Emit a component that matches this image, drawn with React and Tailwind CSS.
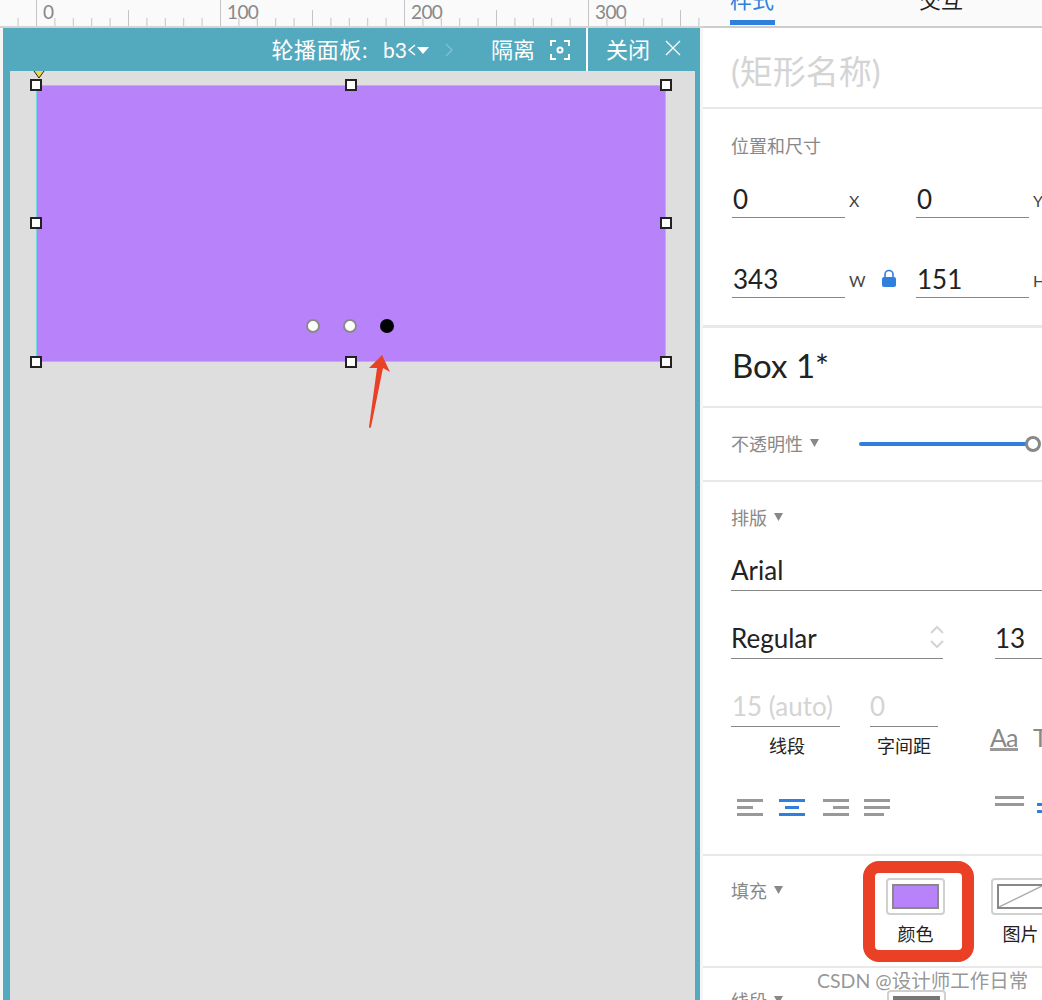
const font = { fontFamily: 'Lato, "Noto Sans CJK SC", sans-serif' }

const ticks = Array.from({ length: 38 }, (_, i) => i - 1)

const Ruler = () => (
  <div className="relative h-[28px] bg-[#fafafa] border-b-2 border-[#d4d4d4] overflow-hidden">
    <svg width="703" height="27" className="block">
      {ticks.map((n) => {
        const x = 36.5 + n * 18.4
        const y1 = n % 10 === 0 ? 0 : n % 5 === 0 ? 10 : 18
        return <line key={n} x1={x} x2={x} y1={y1} y2="26" stroke="#c4c4c4" strokeWidth="1" />
      })}
    </svg>
    {[
      ['0', 'left-[43px]'],
      ['100', 'left-[227px]'],
      ['200', 'left-[411px]'],
      ['300', 'left-[595px]'],
    ].map(([label, pos]) => (
      <span key={label} className={`absolute top-[1px] text-[19px] leading-[22px] tracking-[-0.6px] text-[#888] ${pos}`}>
        {label}
      </span>
    ))}
  </div>
)

const Handle = ({ pos }) => (
  <span className={`absolute w-[12px] h-[12px] bg-white border-2 border-[#222] ${pos}`} />
)

const Canvas = () => (
  <div className="relative flex-1 bg-[#dedede] pl-[26px] pt-[14px]">
    <svg width="12" height="8" className="absolute left-[23px] top-0">
      <path d="M1 0 L6 7 L11 0" fill="#ecd94a" stroke="#222" strokeWidth="1" />
    </svg>
    <div className="relative w-[630px] h-[277px] bg-[#b882fa] border-[1.5px] border-[#6fd8d8] flex items-end justify-center gap-[23px] pb-[28px] pr-[3px]">
      <span className="w-[14px] h-[14px] rounded-full bg-white border-2 border-[#8a8a8a]" />
      <span className="w-[14px] h-[14px] rounded-full bg-white border-2 border-[#8a8a8a]" />
      <span className="w-[14px] h-[14px] rounded-full bg-black" />
      <Handle pos="-left-[7px] -top-[7px]" />
      <Handle pos="left-[308px] -top-[7px]" />
      <Handle pos="-right-[7px] -top-[7px]" />
      <Handle pos="-left-[7px] top-[131px]" />
      <Handle pos="-right-[7px] top-[131px]" />
      <Handle pos="-left-[7px] -bottom-[7px]" />
      <Handle pos="left-[308px] -bottom-[7px]" />
      <Handle pos="-right-[7px] -bottom-[7px]" />
    </div>
    {/* red annotation arrow */}
    <svg width="40" height="90" className="absolute left-[350px] top-[279px]">
      <path d="M22 5 L30 22 L23 18 L11 77 Q10 79 9 77 L17 18 L9 18 Z" fill="#ea4025" />
    </svg>
  </div>
)

const TopBar = () => (
  <div className="h-[43px] flex items-center text-white text-[22px] leading-none">
    <div className="flex-1 flex items-center justify-end h-full pr-[16px]">
      <span className="whitespace-nowrap tracking-[0.6px]">轮播面板:</span>
      <span className="ml-[15px] text-[21px]">b3</span>
      <svg width="10" height="14">
        <path d="M8 2 L2 7 L8 12" fill="none" stroke="white" strokeWidth="1.5" />
      </svg>
      <svg width="12" height="8" className="mr-[15px]">
        <path d="M0 1 H12 L6 8 Z" fill="white" />
      </svg>
      <svg width="10" height="16" className="mr-[37px]">
        <path d="M2 2 L8 8 L2 14" fill="none" stroke="#7cc0d0" strokeWidth="1.5" />
      </svg>
      <span>隔离</span>
      <svg width="20" height="20" viewBox="0 0 20 20" className="ml-[15px]" fill="none" stroke="white" strokeWidth="2">
        <path d="M1 6 V1 H6 M14 1 H19 V6 M19 14 V19 H14 M6 19 H1 V14" />
        <circle cx="10" cy="10" r="2.5" />
      </svg>
    </div>
    <div className="w-[2px] h-full bg-white" />
    <div className="w-[112px] flex items-center h-full pl-[18px]">
      <span>关闭</span>
      <svg width="16" height="16" viewBox="0 0 16 16" className="ml-[15px] mb-[3px]" fill="none" stroke="white" strokeWidth="1.4">
        <path d="M1 1 L15 15 M15 1 L1 15" />
      </svg>
    </div>
  </div>
)

const Field = ({ value, label }) => (
  <div className="flex items-end">
    <div className="w-[113px] h-[38px] border-b-[1.5px] border-[#888] text-[26px] leading-[38px] pl-[1px] text-[#222]">{value}</div>
    <span className="w-[26px] pl-[4px] pb-[8px] text-[16px] leading-[18px] text-[#444]">{label}</span>
  </div>
)

const Caret = () => (
  <svg width="9" height="8" className="ml-[7px] mb-[3px] shrink-0">
    <path d="M0 0 H9 L4.5 8 Z" fill="#888" />
  </svg>
)

const SectionLabel = ({ children, width }) => (
  <div className={`flex items-center text-[18px] leading-[22px] text-[#888] whitespace-nowrap shrink-0 ${width}`}>
    {children}
    <Caret />
  </div>
)

const AlignIcon = ({ rows, color = '#999', className = '' }) => (
  <div className={`flex flex-col gap-[4px] w-[26px] ${className}`}>
    {rows.map((r, i) => (
      <span key={i} className={`h-[3px] ${r}`} style={{ background: color }} />
    ))}
  </div>
)

const Swatch = ({ children }) => (
  <div className="w-[59px] h-[37px] rounded-[4px] border-2 border-[#d0d0d0] p-[4px] shrink-0">
    <div className="w-full h-full border-2 border-[#888]">{children}</div>
  </div>
)

const Panel = () => (
  <div className="relative w-[339px] h-[1000px] bg-white overflow-hidden text-[#222]">
    {/* tabs, cut by the top edge */}
    <div className="h-[28px] bg-[#fafafa] border-b-2 border-[#ccc] relative overflow-hidden">
      <span className="absolute left-[27px] -top-[15px] text-[22px] leading-[30px] text-[#2f80dc]">样式</span>
      <span className="absolute left-[27px] bottom-[1px] w-[45px] h-[5px] bg-[#2f80dc]" />
      <span className="absolute left-[216px] -top-[15px] text-[22px] leading-[30px] text-[#222]">交互</span>
    </div>

    <div className="h-[81px] border-b-2 border-[#e8e8e8] pl-[28px] pt-[23px] text-[33px] leading-[40px] text-[#d4d4d4] whitespace-nowrap">
      (矩形名称)
    </div>

    <div className="h-[219px] border-b-[3px] border-[#e8e8e8] pl-[29px] pt-[26px]">
      <div className="-ml-[1px] text-[18px] leading-[22px] text-[#888]">位置和尺寸</div>
      <div className="flex gap-[45px] mt-[23px] w-[400px]">
        <Field value="0" label="X" />
        <Field value="0" label="Y" />
      </div>
      <div className="flex mt-[42px] w-[400px]">
        <Field value="343" label="W" />
        <svg width="16" height="19" viewBox="0 0 16 19" className="self-center ml-[10px] mr-[19px] -mt-[2px]">
          <path d="M4 9 V5.5 a4 4 0 0 1 8 0 V9" fill="none" stroke="#2f80dc" strokeWidth="1.6" />
          <rect x="1" y="8" width="14" height="10" rx="2" fill="#2f80dc" />
        </svg>
        <Field value="151" label="H" />
      </div>
    </div>

    <div className="h-[80px] border-b-2 border-[#e8e8e8] pl-[29px] pb-[4px] flex items-center text-[33px] leading-none text-[#222]">
      Box 1*
    </div>

    <div className="h-[74px] border-b-2 border-[#e8e8e8] pl-[28px] flex items-center">
      <SectionLabel width="w-[128px]">不透明性</SectionLabel>
      <div className="w-[174px] h-[4px] rounded-full bg-[#2f80dc] relative shrink-0">
        <span className="absolute -right-[8px] -top-[6px] w-[16px] h-[16px] rounded-full bg-white border-[3px] border-[#888]" />
      </div>
    </div>

    <div className="h-[374px] border-b-2 border-[#e8e8e8] pl-[28px] pt-[25px]">
      <SectionLabel>排版</SectionLabel>
      <div className="mt-[23px] h-[39px] border-b-[1.5px] border-[#888] text-[26px] leading-[37px]">Arial</div>
      <div className="flex mt-[28px] w-[400px]">
        <div className="w-[212px] h-[40px] border-b-[1.5px] border-[#888] text-[26px] leading-[38px] flex justify-between">
          <span>Regular</span>
          <svg width="16" height="26" viewBox="0 0 16 26" fill="none" stroke="#d4d4d4" strokeWidth="2" className="mt-[5px] -mr-[2px]">
            <path d="M2 9 L8 3 L14 9 M2 17 L8 23 L14 17" />
          </svg>
        </div>
        <div className="ml-[52px] w-[80px] h-[40px] border-b-[1.5px] border-[#888] text-[26px] leading-[38px]">13</div>
      </div>
      <div className="flex mt-[29px] w-[400px] items-start">
        <div className="w-[109px] text-center">
          <div className="h-[39px] border-b-[1.5px] border-[#888] text-left pl-[1px] text-[26px] leading-[37px] text-[#d4d4d4] whitespace-nowrap">15 (auto)</div>
          <div className="mt-[8px] text-[18px] leading-[22px] pl-[3px]">线段</div>
        </div>
        <div className="ml-[30px] w-[68px] text-center">
          <div className="h-[39px] border-b-[1.5px] border-[#888] text-left text-[26px] leading-[37px] text-[#d4d4d4]">0</div>
          <div className="mt-[8px] text-[18px] leading-[22px] whitespace-nowrap">字间距</div>
        </div>
        <div className="ml-[52px] mt-[38px] w-[28px] border-b-[3px] border-[#999] text-[25px] leading-[22px] text-[#888] tracking-[-1px]">Aa</div>
        <div className="ml-[15px] mt-[38px] text-[25px] leading-[22px] text-[#888]">T</div>
      </div>
      <div className="flex items-start mt-[36px] ml-[6px] w-[400px]">
        <div className="flex mt-[6px]">
          <AlignIcon rows={['w-full', 'w-[16px]', 'w-full']} />
          <AlignIcon rows={['w-full', 'w-[14px] self-center', 'w-full']} color="#2f80dc" className="ml-[16px]" />
          <AlignIcon rows={['w-full', 'w-[16px] self-end', 'w-full']} className="ml-[18px]" />
          <AlignIcon rows={['w-full', 'w-full', 'w-[20px]']} className="ml-[15px]" />
        </div>
        <div className="flex gap-[13px] ml-[105px] mt-[3px]">
          <div className="flex flex-col gap-[4px] w-[29px]">
            <span className="h-[3px] bg-[#999]" />
            <span className="h-[3px] bg-[#999]" />
          </div>
          <div className="flex flex-col gap-[4px] w-[29px] mt-[7px]">
            <span className="h-[3px] bg-[#2f80dc]" />
            <span className="h-[3px] bg-[#2f80dc]" />
          </div>
        </div>
      </div>
    </div>

    <div className="h-[112px] border-b-2 border-[#e8e8e8] pl-[28px] flex items-start">
      <div className="mt-[24px]">
        <SectionLabel width="w-[132px]">填充</SectionLabel>
      </div>
      <div className="mt-[5px] w-[111px] h-[101px] border-[12px] border-[#ea4025] rounded-[16px] flex flex-col items-center pt-[5px] pr-[6px] shrink-0">
        <Swatch>
          <div className="w-full h-full bg-[#b882fa]" />
        </Swatch>
        <span className="mt-[7px] text-[18px] leading-[24px] whitespace-nowrap">颜色</span>
      </div>
      <div className="ml-[17px] mt-[22px] flex flex-col items-center w-[59px] shrink-0">
        <Swatch>
          <svg width="100%" height="100%" viewBox="0 0 49 21" preserveAspectRatio="none">
            <line x1="0" y1="21" x2="49" y2="0" stroke="#aaa" strokeWidth="1.5" />
          </svg>
        </Swatch>
        <span className="mt-[7px] text-[18px] leading-[24px] whitespace-nowrap">图片</span>
      </div>
    </div>

    <div className="pl-[28px] pt-[22px] flex items-start">
      <SectionLabel width="w-[156px]">线段</SectionLabel>
      <div className="w-[59px] h-[37px] rounded-[4px] border-2 border-[#d0d0d0] p-[4px] shrink-0">
        <div className="w-full h-full bg-[#777]" />
      </div>
      <span className="ml-[44px] mt-[5px] text-[25px] leading-[30px]">2</span>
    </div>

    <span className="absolute left-[114px] top-[970px] text-[19.5px] leading-[22px] text-[#8a8a8a]/90 whitespace-nowrap">
      CSDN @设计师工作日常
    </span>
  </div>
)

export default function App() {
  return (
    <div className="flex w-[1042px] h-[1000px] overflow-hidden bg-white" style={font}>
      <div className="w-[703px] h-full flex flex-col">
        <Ruler />
        <div className="flex-1 min-h-0 flex pl-[3px] pr-[3px] bg-[#f5f5f5]">
          <div className="flex-1 flex flex-col bg-[#53a9be] pl-[7px] pr-[5px]">
            <div className="-ml-[7px] -mr-[5px]">
              <TopBar />
            </div>
            <Canvas />
          </div>
        </div>
      </div>
      <Panel />
    </div>
  )
}
